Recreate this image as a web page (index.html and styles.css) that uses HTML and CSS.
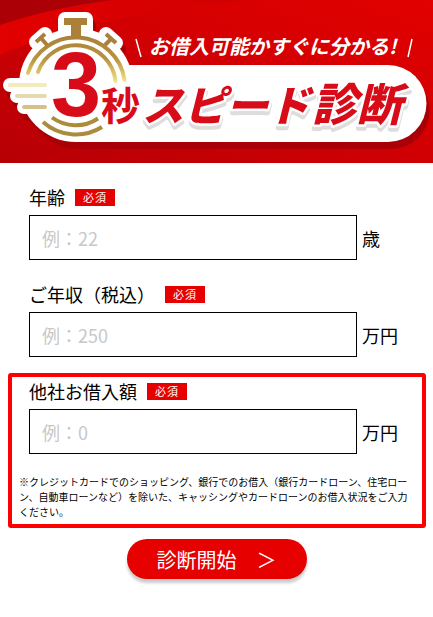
FILE: index.html
```html
<!DOCTYPE html>
<html lang="ja">
<head>
    <meta charset="UTF-8">
    <meta name="viewport" content="width=device-width, initial-scale=1.0">
    <title>3秒スピード診断</title>
    <link rel="stylesheet" href="styles.css">
</head>
<body>
    <header>
        <svg class="banner" viewBox="0 0 433 163" role="img" aria-label="お借入可能かすぐに分かる！3秒スピード診断">
            <defs>
                <linearGradient id="base" x1="0" y1="1" x2="1" y2="0">
                    <stop offset="0" stop-color="#b60006"/>
                    <stop offset="0.5" stop-color="#d00003"/>
                    <stop offset="1" stop-color="#e20000"/>
                </linearGradient>
                <linearGradient id="band" x1="0" y1="0" x2="1" y2="0">
                    <stop offset="0" stop-color="#e20000"/>
                    <stop offset="1" stop-color="#d00003"/>
                </linearGradient>
                <linearGradient id="gold" gradientUnits="userSpaceOnUse" x1="0" y1="36" x2="0" y2="82">
                    <stop offset="0" stop-color="#ab8139"/>
                    <stop offset="0.5" stop-color="#b8933f"/>
                    <stop offset="1" stop-color="#f2e684"/>
                </linearGradient>
                <!-- stopwatch and pill outline, used for the white shape and its shadow -->
                <g id="plate">
                    <circle cx="76" cy="85" r="57"/>
                    <path d="M76 65H388A38.500 38.500 0 0 1 388 142H76Z"/>
                    <rect x="58" y="12" width="35" height="30" rx="7"/>
                    <path d="M36 42L45 34M41 38L50 48M106 34L116 43M111 39L102 48" fill="none" stroke-width="14" stroke-linecap="round"/>
                    <path d="M10 85H45M17 96H45M24 107H45" fill="none" stroke-width="14" stroke-linecap="round"/>
                </g>
            </defs>

            <rect width="433" height="163" fill="url(#base)"/>
            <path d="M0 0H250Q90 14 0 55Z" fill="url(#band)"/>
            <path d="M0 0H112Q50 8 0 25Z" fill="#aa0006"/>

            <use href="#plate" x="3" y="7" class="plate-shadow"/>
            <use href="#plate" class="plate"/>

            <!-- stopwatch -->
            <g fill="none" stroke="url(#gold)" stroke-width="4" stroke-linecap="round">
                <path d="M28 73A49.500 49.500 0 0 1 124.500 80"/>
                <path d="M38 72A40 40 0 0 1 115.500 81"/>
            </g>
            <g fill="none" stroke="#ab8c3c" stroke-width="4">
                <path d="M43 122A49.500 49.500 0 0 0 102 127"/>
                <path d="M52 117.500A40 40 0 0 0 98 118.500"/>
            </g>
            <path d="M64 18H87V25H81V37H71V25H64Z" fill="#ab8139"/>
            <path d="M36 42L45 34M41 38L47 45M106 34L116 43M111 39L105 45" fill="none" stroke="#ab8139" stroke-width="4"/>
            <path d="M10 85H45" class="speed speed-1"/>
            <path d="M17 96H45" class="speed speed-2"/>
            <path d="M24 107H45" class="speed speed-3"/>

            <text x="51" y="116" class="count">3</text>
            <text x="101" y="120" class="second">秒</text>

            <g class="title">
                <text x="142" y="121">スピード</text>
                <text x="312" y="121" class="kanji">診断</text>
            </g>

            <text x="149" y="54" class="lead">お借入可能かすぐに分かる!</text>
            <path d="M136 39L141 57M412 39L408 57" stroke="#fff" stroke-width="1.500"/>
        </svg>
    </header>

    <form>
        <div class="field">
            <div class="field-head">
                <label for="age">年齢</label>
                <span class="required">必須</span>
            </div>
            <div class="field-body">
                <input type="text" id="age" name="age" inputmode="numeric" placeholder="例：22">
                <span class="unit">歳</span>
            </div>
        </div>

        <div class="field">
            <div class="field-head">
                <label for="income">ご年収（税込）</label>
                <span class="required">必須</span>
            </div>
            <div class="field-body">
                <input type="text" id="income" name="income" inputmode="numeric" placeholder="例：250">
                <span class="unit">万円</span>
            </div>
        </div>

        <div class="highlight">
            <div class="field">
                <div class="field-head">
                    <label for="debt">他社お借入額</label>
                    <span class="required">必須</span>
                </div>
                <div class="field-body">
                    <input type="text" id="debt" name="debt" inputmode="numeric" placeholder="例：0">
                    <span class="unit">万円</span>
                </div>
            </div>
            <p class="note">※クレジットカードでのショッピング、銀行でのお借入（銀行カードローン、住宅ローン、自動車ローンなど）を除いた、キャッシングやカードローンのお借入状況をご入力ください。</p>
        </div>

        <button type="button" class="start">診断開始　＞</button>
    </form>
</body>
</html>
```
FILE: styles.css
```css
* {
    box-sizing: border-box;
}

body {
    margin: 0;
    background-color: #fff;
    color: #000;
    font-family: "Noto Sans CJK JP", sans-serif;
    font-size: 18px;
}

/* Banner */
.banner {
    display: block;
    width: 100%;
    height: auto;
}

.plate {
    fill: #fff;
    stroke: #fff;
    stroke-width: 0;
}

.plate-shadow {
    fill: #a80006;
    stroke: #a80006;
    stroke-width: 0;
}

.speed {
    fill: none;
    stroke-width: 4;
    stroke-linecap: round;
}

.speed-1 {
    stroke: #f3ebbc;
}

.speed-2 {
    stroke: #e6dab0;
}

.speed-3 {
    stroke: #d5c08c;
}

.count {
    fill: #d80c18;
    font-family: "Liberation Sans", Arial, sans-serif;
    font-size: 90px;
    font-weight: 700;
}

.second {
    fill: #d80c18;
    font-size: 39px;
    font-weight: 700;
}

.title {
    fill: #d80c18;
    stroke: #fff;
    stroke-width: 5;
    stroke-linejoin: round;
    paint-order: stroke;
    font-size: 42px;
    font-style: italic;
    font-weight: 900;
    filter: drop-shadow(0 4px 0 #dedcdd);
}

.kanji {
    font-size: 45px;
}

.lead {
    fill: #fff;
    font-size: 20px;
    font-style: italic;
    font-weight: 700;
}

/* Form */
form {
    padding: 21px 0 38px;
}

.field {
    margin: 0 35px 21px 29px;
}

.field-head {
    display: flex;
    align-items: center;
    gap: 10px;
    margin-bottom: 4px;
    line-height: 27px;
}

.required {
    padding: 0 8px;
    background-color: #e60000;
    color: #fff;
    font-size: 11px;
    line-height: 17px;
    letter-spacing: 1px;
}

.field-body {
    display: flex;
    align-items: center;
    gap: 5px;
}

.field-body input {
    flex: 1;
    min-width: 0;
    height: 45px;
    padding: 0 12px;
    border: 1px solid #000;
    border-radius: 0;
    background-color: #fff;
    font-family: inherit;
    font-size: 18px;
}

.field-body input::placeholder {
    color: #c8c8c8;
}

.unit {
    width: 36px;
}

.highlight {
    margin: -5px 7px 11px 8px;
    padding: 1px 10px 5px 7px;
    border: 4px solid #ff0000;
    border-radius: 3px;
}

.highlight .field {
    margin: 0 14px 20px 10px;
}

.note {
    margin: 0;
    font-size: 10px;
    line-height: 15px;
}

.start {
    display: block;
    width: 180px;
    height: 40px;
    margin: 0 auto;
    padding: 0;
    border: none;
    border-radius: 20px;
    background-color: #e60000;
    box-shadow: 0 4px 3px #cccccc;
    color: #fff;
    font-family: inherit;
    font-size: 20px;
    cursor: pointer;
}
```
